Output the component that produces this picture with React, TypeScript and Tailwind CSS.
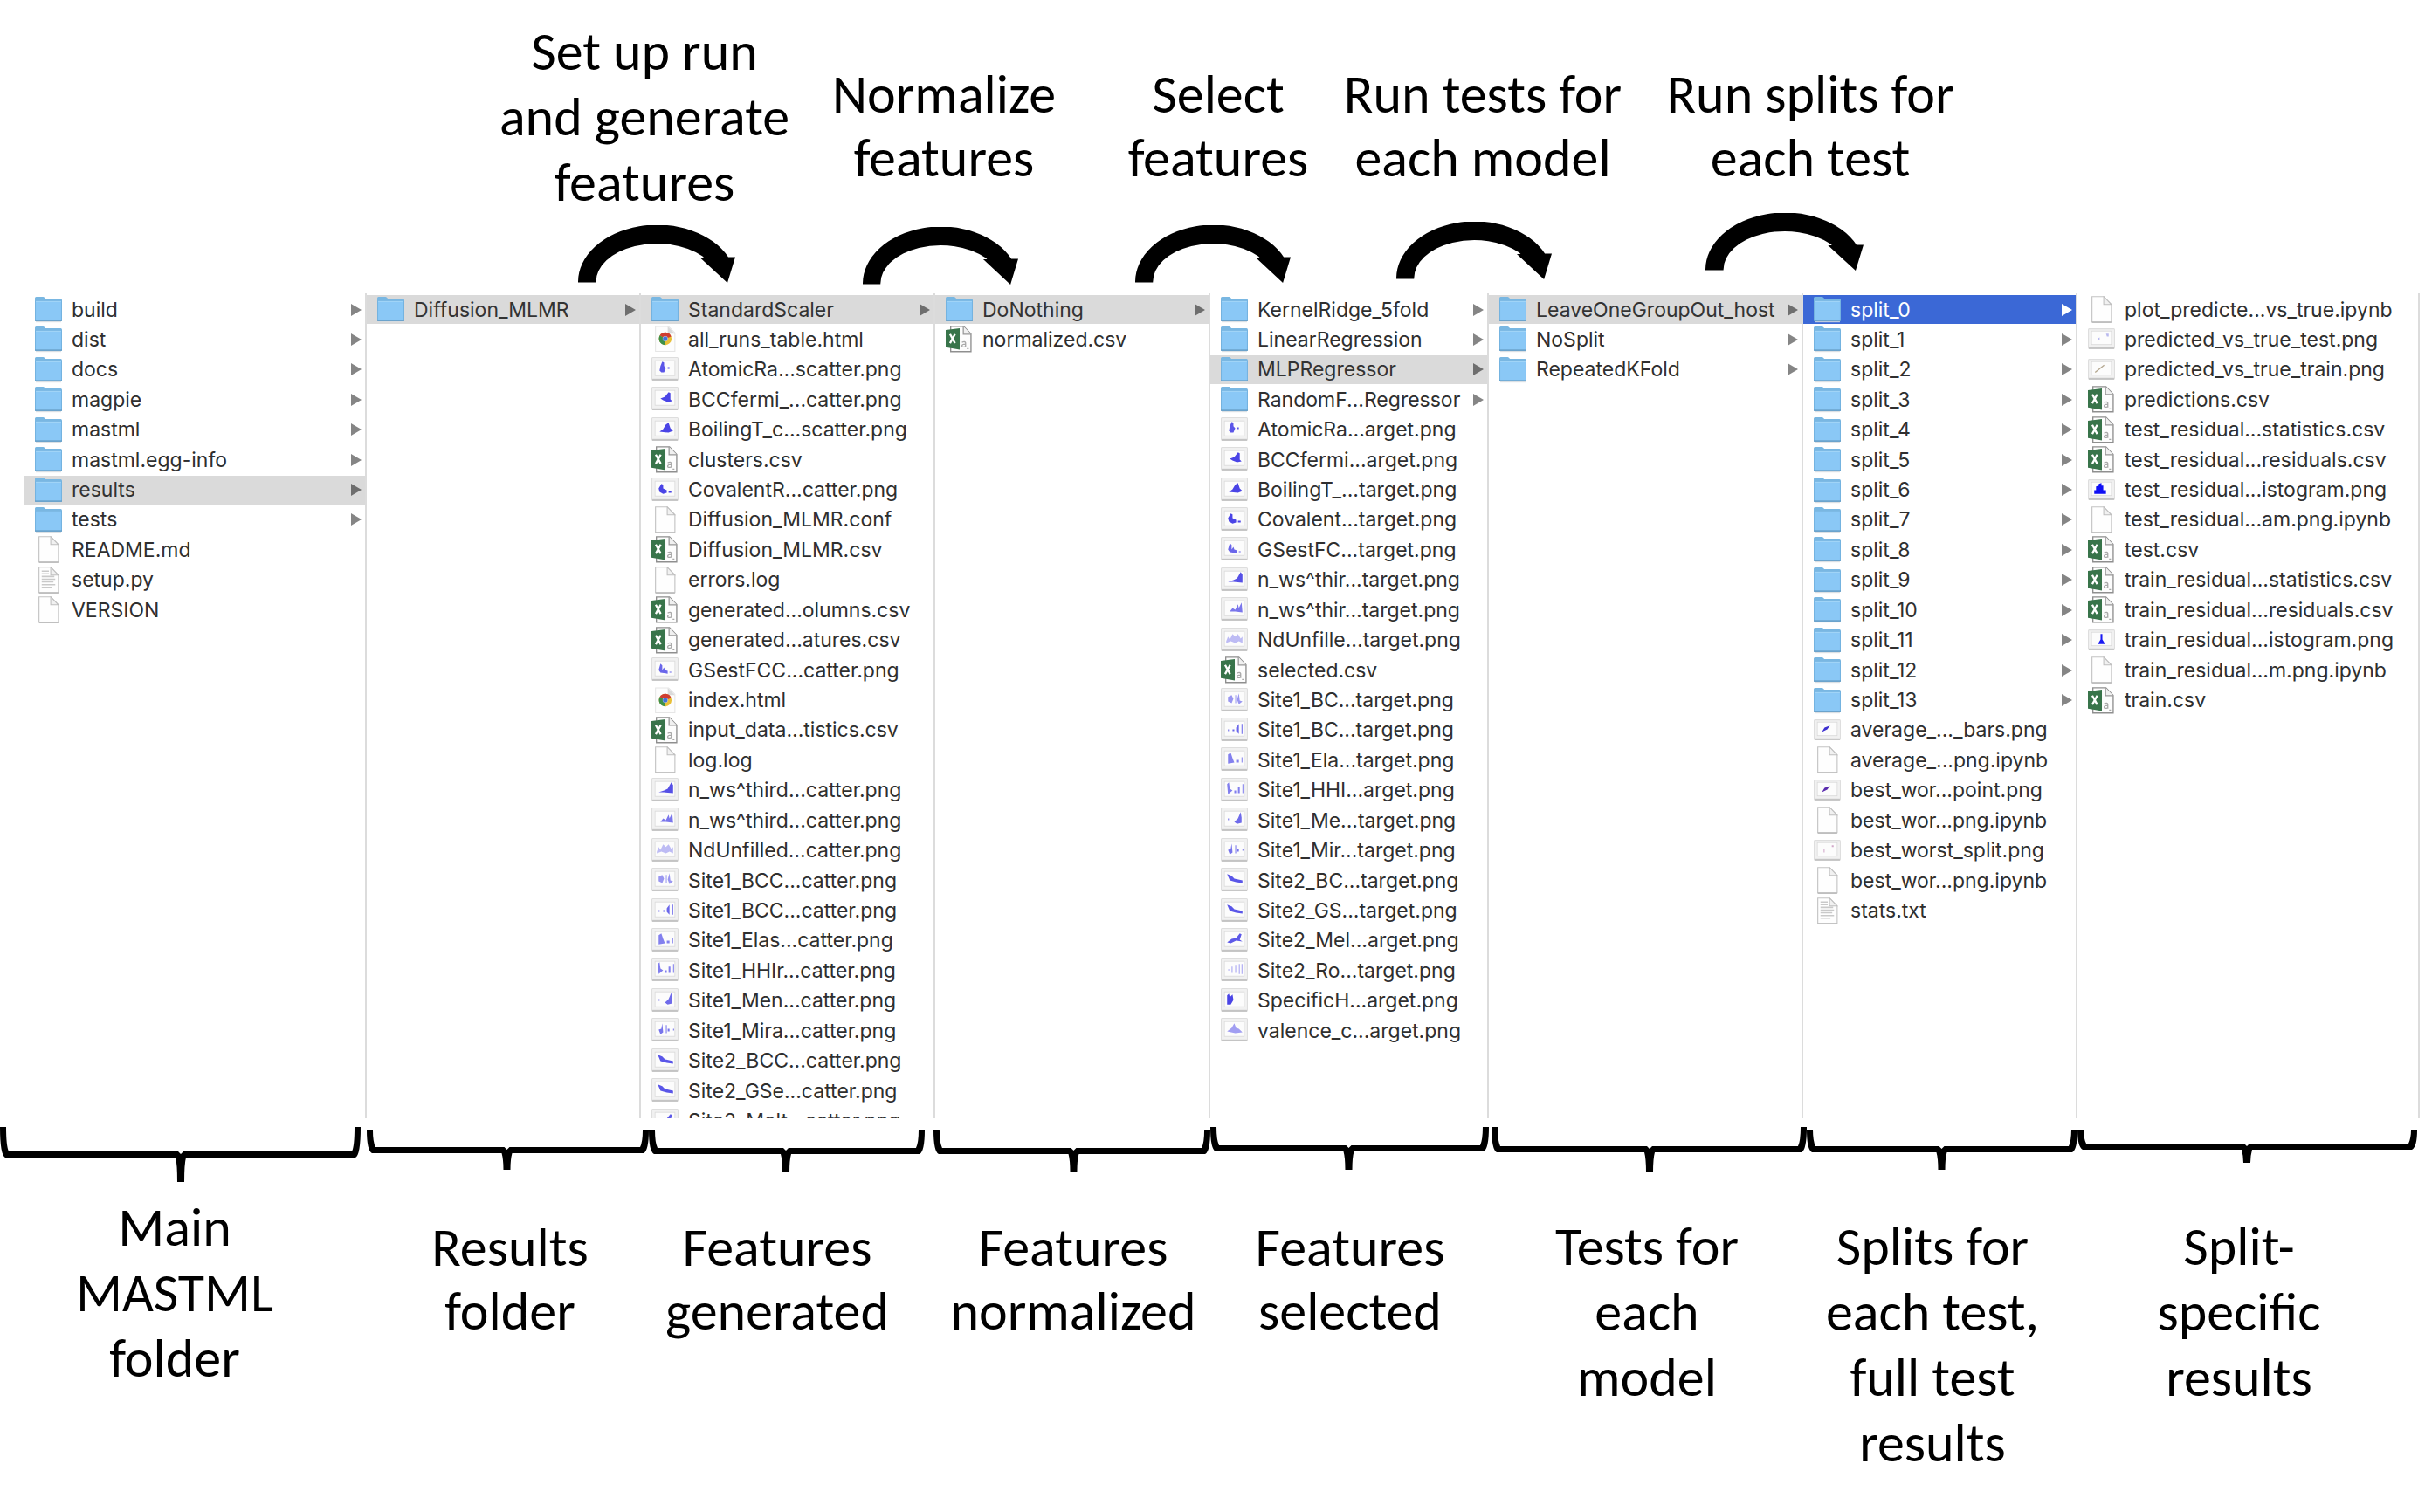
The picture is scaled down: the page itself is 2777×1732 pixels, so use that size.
import React from "react";

type Kind = "folder" | "doc" | "text" | "html" | "csv" | "png" | "wide";
type Entry = { name: string; kind: Kind; plot?: string };
type Column = { label: string; selected?: string; active?: boolean; entries: Entry[] };

/* Marks drawn inside the image thumbnails, on a 30 x 30 grid. */
const plots: Record<string, React.ReactNode> = {
  atomic: <path d="M10 11l2-5 2 1v4l2 2-2 5h-3l-2-2zM18 12h2v2h-2z" fill="#5a55e8" />,
  fermi: <path d="M10 14l5-2 4-5 2 1v7l2 2-5 1-5-2z" fill="#4a44e6" />,
  boiling: <path d="M9 17l4-3 3-5 3-2 2 6 3 3-5 2z" fill="#4a44e6" />,
  covalent: <path d="M8 13l3-5 2 1v4l4 2v3l-4 1-4-2zM19 16h3v2h-3z" fill="#4a44e6" />,
  gsest: <path d="M8 15l2-7 2 2v5l2-3 1 3 3 1v3l-8-1zM20 17h2v1h-2z" fill="#6a66ea" />,
  nws: <path d="M8 17l6-2 4-2 4-7 2 3v9l-10-1z" fill="#5650e6" />,
  nws2: <path d="M10 17l3-4 3 2 3-6 1 4 3-6 1 11-8-1z" fill="#7a76ec" />,
  unfilled: <path d="M6 16l2-5 2 3 3-6 3 3 3-3 3 5 2-2v7l-4-2-4 2-5-2-5 2z" fill="#bdbbf4" />,
  pair: <path d="M8 11l4-2 2 4-2 5-4-2zM16 9h1v9h-1zM18 14l2-7 1 8 3 1-4 3z" fill="#9a97f1" />,
  spike: <path d="M8 14h1v2H8zM13 14h2v2h-2zM17 12l3-4v11l-3-3zM23 8h1v11h-1z" fill="#6a66ea" />,
  elastic: <path d="M8 9l3-2 2 6 2 5-7 1zM17 15h3v3h-3zM23 12h1v6h-1z" fill="#8380ee" />,
  hhi: <path d="M7 8l2-2 1 7 3 2-5 4zM15 15h2v3h-2zM19 11h2v7h-2zM24 8h1v10h-1z" fill="#817eee" />,
  men: <path d="M8 13h1v2H8zM15 17l4-4 3-7 1 6v6l-5 1z" fill="#6f6bea" />,
  mira: <path d="M8 14l3-1 1-6 1 10-3 2zM16 9h1v9h-1zM18 13h2v3h-2zM24 13h1v2h-1z" fill="#7774ec" />,
  falling: <path d="M7 8l5 2 3 3 9 2v3l-7-1-7-2z" fill="#5a56e8" />,
  rising: <path d="M7 17l5-4 5-1 4-5 2 1-2 6 3 2-7-1-6 3z" fill="#5d59e8" />,
  bars: <path d="M8 14h2v1H8zM12 11h1v7h-1zM16 9h1v9h-1zM20 8h1v11h-1zM23 8h1v11h-1z" fill="#a5a2f2" />,
  block: <path d="M7 9l2-2 1 4 3-3 1 6-3 5H7z" fill="#4a44e6" />,
  valence: <path d="M7 16l5-4 3-5 2 5 3 1 4 4-8 1z" fill="#a19ef2" />,
  parity: <path d="M9 17l3-5 6-2-3 4z" fill="#3d2fd0" />,
  parityRed: <path d="M9 17l3-5 6-2-3 4z" fill="#5a2cae" />,
  dot: <path d="M11 13h1v4h-1zM20 9h2v2h-2z" fill="#d1a6c8" />,
  faint: <path d="M11 14l2-1v3h-2zM20 9h3v3h-2z" fill="#b9b9ee" />,
  line: <path d="M8 18L18 10" stroke="#b3a68e" strokeWidth="1.3" fill="none" />,
  histogram: <path d="M7 19v-4h2v-4l3-1V8l3-1v3h2v5h3v4z" fill="#1010f5" />,
  histogramThin: <path d="M11 19l3-5V8h2v6l3 5z" fill="#1a1af2" />,
};

function FolderIcon() {
  return (
    <svg viewBox="0 0 30 30" className="size-[31px] shrink-0" aria-hidden="true">
      <path d="M0 2.500Q0 1 1.500 1H9q1 0 1.800 1l.9 1H28.500Q30 3 30 4.500V8H0z" fill="#79b7e2" />
      <path d="M0 6.200h30V26.500Q30 28 28.500 28h-27Q0 28 0 26.500z" fill="#8ac8f6" />
      <path d="M.5 6.200h29" stroke="#a3d6f8" strokeWidth="1" />
      <path d="M.5 5v22M29.500 5v22" stroke="#74b3e0" strokeWidth="1" />
      <path d="M0 27.200h30" stroke="#6298c0" strokeWidth="1.300" />
      <path d="M1 28.700h28" stroke="#d5dbe0" strokeWidth="1" />
    </svg>
  );
}

function Page({ children }: { children?: React.ReactNode }) {
  return (
    <svg viewBox="0 0 30 30" className="size-[31px] shrink-0" aria-hidden="true">
      <path d="M4.500.7h13L26 9.500v19.300H4.500z" fill="#fefefe" stroke="#c4c4c4" strokeWidth="1.100" />
      <path d="M17.500.7v8.800H26z" fill="#f1f1f1" stroke="#bfbfbf" strokeWidth="1" />
      <path d="M4.500 29.200H26" stroke="#b3b3b3" strokeWidth="1.200" />
      {children}
    </svg>
  );
}

function HtmlIcon() {
  return (
    <svg viewBox="0 0 30 30" className="size-[31px] shrink-0" aria-hidden="true">
      <path d="M4.500 1h14.500L26 8v20.500H4.500z" fill="#fdfdfd" stroke="#e6e6e6" strokeWidth="1" />
      <path d="M18 1v8h8z" fill="#dadada" />
      <circle cx="15.300" cy="14.500" r="7" fill="#e8bf36" />
      <path d="M15.300 14.500L9.200 11A7 7 0 0 1 21.900 12z" fill="#cf3d31" />
      <path d="M15.300 14.500L9.200 11a7 7 0 0 0 5.500 10.500z" fill="#3d8f4a" />
      <circle cx="15.300" cy="14.500" r="2.900" fill="#b9c9ee" />
      <circle cx="15.300" cy="14.500" r="2.500" fill="#4273d8" />
    </svg>
  );
}

function CsvIcon() {
  return (
    <svg viewBox="0 0 30 30" className="size-[31px] shrink-0" aria-hidden="true">
      <path d="M5.500.8h14.500l8 8.500v19.500H5.500z" fill="#fdfdfd" stroke="#8f8f8f" strokeWidth="1.300" />
      <path d="M19.500.8v8.700H28" fill="#f0f0f0" stroke="#979797" strokeWidth="1.200" />
      <path d="M18 18.500q3.500-1.500 4 .5v5M22 20.500q-4 0-4 2t4 .5M23.500 25.500h2" fill="none" stroke="#a9a9a9" strokeWidth="1.300" />
      <path d="M0 4.800L15.500 3v23.500L0 24z" fill="#38744a" />
      <path d="M4.800 9.500l5.500 10M10.300 9.500l-5.500 10" stroke="#fff" strokeWidth="2.200" />
    </svg>
  );
}

function ImageIcon({ plot, wide }: { plot?: string; wide?: boolean }) {
  return (
    <svg viewBox="0 0 30 30" className="size-[31px] shrink-0" aria-hidden="true">
      <rect x="0.500" y={wide ? 3.500 : 1.500} width="29" height={wide ? 22 : 25} rx="1" fill="#f1f1f1" stroke="#dedede" />
      <rect x="4" y={wide ? 6 : 5} width="22" height={wide ? 15 : 16.500} fill="#fcfcfc" stroke="#dadada" strokeWidth="0.800" />
      <path d={wide ? "M1 25h28" : "M1 26h28"} stroke="#c4c4c4" strokeWidth="2" />
      {plot ? plots[plot] : null}
    </svg>
  );
}

function Icon({ entry }: { entry: Entry }) {
  switch (entry.kind) {
    case "folder":
      return <FolderIcon />;
    case "html":
      return <HtmlIcon />;
    case "csv":
      return <CsvIcon />;
    case "png":
      return <ImageIcon plot={entry.plot} />;
    case "wide":
      return <ImageIcon plot={entry.plot} wide />;
    case "text":
      return (
        <Page>
          <path d="M7.500 5h8M7.500 8h8M7.500 11h14M7.500 14h15M7.500 17h13M7.500 20h15M7.500 23h11" stroke="#c9c9c9" strokeWidth="1.500" />
        </Page>
      );
    default:
      return <Page />;
  }
}

const folder = (name: string): Entry => ({ name, kind: "folder" });
const doc = (name: string): Entry => ({ name, kind: "doc" });
const csv = (name: string): Entry => ({ name, kind: "csv" });
const png = (name: string, plot: string): Entry => ({ name, kind: "png", plot });
const wide = (name: string, plot: string): Entry => ({ name, kind: "wide", plot });

const columns: Column[] = [
  {
    label: "Main MASTML folder",
    selected: "results",
    entries: [
      folder("build"),
      folder("dist"),
      folder("docs"),
      folder("magpie"),
      folder("mastml"),
      folder("mastml.egg-info"),
      folder("results"),
      folder("tests"),
      doc("README.md"),
      { name: "setup.py", kind: "text" },
      doc("VERSION"),
    ],
  },
  { label: "Results folder", selected: "Diffusion_MLMR", entries: [folder("Diffusion_MLMR")] },
  {
    label: "Features generated",
    selected: "StandardScaler",
    entries: [
      folder("StandardScaler"),
      { name: "all_runs_table.html", kind: "html" },
      png("AtomicRa...scatter.png", "atomic"),
      png("BCCfermi_...catter.png", "fermi"),
      png("BoilingT_c...scatter.png", "boiling"),
      csv("clusters.csv"),
      png("CovalentR...catter.png", "covalent"),
      doc("Diffusion_MLMR.conf"),
      csv("Diffusion_MLMR.csv"),
      doc("errors.log"),
      csv("generated...olumns.csv"),
      csv("generated...atures.csv"),
      png("GSestFCC...catter.png", "gsest"),
      { name: "index.html", kind: "html" },
      csv("input_data...tistics.csv"),
      doc("log.log"),
      png("n_ws^third...catter.png", "nws"),
      png("n_ws^third...catter.png", "nws2"),
      png("NdUnfilled...catter.png", "unfilled"),
      png("Site1_BCC...catter.png", "pair"),
      png("Site1_BCC...catter.png", "spike"),
      png("Site1_Elas...catter.png", "elastic"),
      png("Site1_HHIr...catter.png", "hhi"),
      png("Site1_Men...catter.png", "men"),
      png("Site1_Mira...catter.png", "mira"),
      png("Site2_BCC...catter.png", "falling"),
      png("Site2_GSe...catter.png", "falling"),
      png("Site2_Melt...catter.png", "rising"),
    ],
  },
  { label: "Features normalized", selected: "DoNothing", entries: [folder("DoNothing"), csv("normalized.csv")] },
  {
    label: "Features selected",
    selected: "MLPRegressor",
    entries: [
      folder("KernelRidge_5fold"),
      folder("LinearRegression"),
      folder("MLPRegressor"),
      folder("RandomF...Regressor"),
      png("AtomicRa...arget.png", "atomic"),
      png("BCCfermi...arget.png", "fermi"),
      png("BoilingT_...target.png", "boiling"),
      png("Covalent...target.png", "covalent"),
      png("GSestFC...target.png", "gsest"),
      png("n_ws^thir...target.png", "nws"),
      png("n_ws^thir...target.png", "nws2"),
      png("NdUnfille...target.png", "unfilled"),
      csv("selected.csv"),
      png("Site1_BC...target.png", "pair"),
      png("Site1_BC...target.png", "spike"),
      png("Site1_Ela...target.png", "elastic"),
      png("Site1_HHI...arget.png", "hhi"),
      png("Site1_Me...target.png", "men"),
      png("Site1_Mir...target.png", "mira"),
      png("Site2_BC...target.png", "falling"),
      png("Site2_GS...target.png", "falling"),
      png("Site2_Mel...arget.png", "rising"),
      png("Site2_Ro...target.png", "bars"),
      png("SpecificH...arget.png", "block"),
      png("valence_c...arget.png", "valence"),
    ],
  },
  {
    label: "Tests for each model",
    selected: "LeaveOneGroupOut_host",
    entries: [folder("LeaveOneGroupOut_host"), folder("NoSplit"), folder("RepeatedKFold")],
  },
  {
    label: "Splits for each test",
    selected: "split_0",
    active: true,
    entries: [
      ...Array.from({ length: 14 }, (_, i) => folder(`split_${i}`)),
      wide("average_..._bars.png", "parity"),
      doc("average_...png.ipynb"),
      wide("best_wor...point.png", "parityRed"),
      doc("best_wor...png.ipynb"),
      wide("best_worst_split.png", "dot"),
      doc("best_wor...png.ipynb"),
      { name: "stats.txt", kind: "text" },
    ],
  },
  {
    label: "Split-specific results",
    entries: [
      doc("plot_predicte...vs_true.ipynb"),
      wide("predicted_vs_true_test.png", "faint"),
      wide("predicted_vs_true_train.png", "line"),
      csv("predictions.csv"),
      csv("test_residual...statistics.csv"),
      csv("test_residual...residuals.csv"),
      wide("test_residual...istogram.png", "histogram"),
      doc("test_residual...am.png.ipynb"),
      csv("test.csv"),
      csv("train_residual...statistics.csv"),
      csv("train_residual...residuals.csv"),
      wide("train_residual...istogram.png", "histogramThin"),
      doc("train_residual...m.png.ipynb"),
      csv("train.csv"),
    ],
  },
];

function Row({ entry, selected, active }: { entry: Entry; selected: boolean; active: boolean }) {
  const tone = selected ? (active ? "bg-[#3b68d6] text-white" : "bg-[#dadada] text-[#333333]") : "text-[#2f2f2f]";
  const arrow = selected ? (active ? "fill-white" : "fill-[#6e6e6e]") : "fill-[#858585]";
  return (
    <li>
      <button type="button" className={`flex h-[33px] w-full items-center gap-[11px] pr-1 pl-3 text-left ${tone}`}>
        <Icon entry={entry} />
        <span className="flex-1 whitespace-nowrap">{entry.name}</span>
        {entry.kind === "folder" && (
          <svg viewBox="0 0 12 14" className={`h-3.5 w-3 shrink-0 ${arrow}`} aria-hidden="true">
            <path d="M0 0l12 7L0 14z" />
          </svg>
        )}
      </button>
    </li>
  );
}

function Browser() {
  return (
    <section
      aria-label="File browser"
      className="mr-1.5 ml-7 grid h-[945px] grid-cols-[392fr_314fr_337fr_315fr_319fr_360fr_314fr_392fr] overflow-hidden font-['Inter',sans-serif] text-[23px] leading-8"
    >
      {columns.map((column) => (
        <div key={column.label} className="min-w-0 border-r-2 border-[#dcdcdc] pt-0.5">
          <ul aria-label={column.label} className="grid h-[964px] grid-rows-[repeat(28,minmax(0,1fr))]">
            {column.entries.map((entry, i) => (
              <Row key={i} entry={entry} selected={entry.name === column.selected} active={!!column.active} />
            ))}
          </ul>
        </div>
      ))}
    </section>
  );
}

const steps = [
  { lines: ["Set up run", "and generate", "features"], place: "col-start-2 leading-[75px]" },
  { lines: ["Normalize", "features"], place: "col-start-4 pt-[50px] leading-[73px]" },
  { lines: ["Select", "features"], place: "col-start-6 pt-[50px] leading-[73px]" },
  { lines: ["Run tests for", "each model"], place: "col-start-8 pt-[50px] leading-[73px]" },
  { lines: ["Run splits for", "each test"], place: "col-start-10 pt-[50px] leading-[73px]" },
];

const arrows = ["col-start-2 pt-3.5", "col-start-4 pt-4", "col-start-6 pt-3.5", "col-start-8 pt-2.5", "col-start-10"];

const captions = [
  { lines: ["Main", "MASTML", "folder"], place: "col-start-2 leading-[75px]" },
  { lines: ["Results", "folder"], place: "col-start-4 pt-6 leading-[73px]" },
  { lines: ["Features", "generated"], place: "col-start-6 pt-6 leading-[73px]" },
  { lines: ["Features", "normalized"], place: "col-start-8 pt-6 leading-[73px]" },
  { lines: ["Features", "selected"], place: "col-start-10 pt-6 leading-[73px]" },
  { lines: ["Tests for", "each", "model"], place: "col-start-12 pt-[22px] leading-[75px]" },
  { lines: ["Splits for", "each test,", "full test", "results"], place: "col-start-14 pt-[22px] leading-[75px]" },
  { lines: ["Split-", "specific", "results"], place: "col-start-16 pt-[22px] leading-[75px]" },
];

/* Brace geometry: width, tip position, top, bar top and tip bottom. */
const braces = [
  { w: 413, tip: 207, top: 0, bar: 28, end: 63, place: "col-start-1" },
  { w: 324, tip: 161, top: 3, bar: 23, end: 49, place: "col-start-3" },
  { w: 316, tip: 157, top: 3, bar: 24, end: 52, place: "col-start-4" },
  { w: 320, tip: 162, top: 3, bar: 24, end: 52, place: "col-start-6" },
  { w: 318, tip: 158, top: 0, bar: 21, end: 49, place: "col-start-7" },
  { w: 361, tip: 181, top: 0, bar: 22, end: 52, place: "col-start-9" },
  { w: 309, tip: 154, top: 3, bar: 22, end: 49, place: "col-start-10" },
  { w: 389, tip: 194, top: 3, bar: 19, end: 41, place: "col-start-11" },
];

function Brace({ w, tip, top, bar, end, place }: (typeof braces)[number]) {
  const d = [
    `M0 ${top}H7Q7 ${bar - 6} 10 ${bar}H${tip - 3}L${tip} ${bar + 3}L${tip + 3} ${bar}H${w - 10}Q${w - 7} ${bar - 6} ${w - 7} ${top}H${w}`,
    `Q${w} ${bar + 4} ${w - 6} ${bar + 7}H${tip + 6}Q${tip + 4} ${bar + 14} ${tip + 4} ${end}H${tip - 4}`,
    `Q${tip - 4} ${bar + 14} ${tip - 6} ${bar + 7}H6Q0 ${bar + 4} 0 ${top}z`,
  ].join("");
  return (
    <svg viewBox={`0 0 ${w} 64`} preserveAspectRatio="none" className={`h-16 w-full ${place}`} aria-hidden="true">
      <path d={d} />
    </svg>
  );
}

function Label({ lines, place }: { lines: string[]; place: string }) {
  return (
    <p className={`flex flex-col items-center whitespace-nowrap ${place}`}>
      {lines.map((line) => (
        <span key={line}>{line}</span>
      ))}
    </p>
  );
}

export default function App() {
  return (
    <main className="min-h-screen overflow-x-hidden bg-white font-['Carlito','Lato',sans-serif] text-[62px] text-black">
      <header className="grid h-[244px] grid-cols-[558fr_360fr_23fr_280fr_44fr_260fr_13fr_320fr_45fr_340fr_534fr] items-start pt-[22px]">
        {steps.map((step) => (
          <Label key={step.lines.join(" ")} {...step} />
        ))}
      </header>
      <div className="grid h-[92px] grid-cols-[662fr_180fr_146fr_178fr_134fr_178fr_121fr_178fr_176fr_181fr_643fr] items-start">
        {arrows.map((place) => (
          <svg
            key={place}
            viewBox="0 0 180 66"
            preserveAspectRatio="none"
            className={`box-content h-[66px] w-full ${place}`}
            aria-hidden="true"
          >
            <path d="M0 65.500A90.500 65.500 0 0 1 172 36.500H180L171 66L139.500 37H144L142.500 35.500A70 44 0 0 0 20.500 65.500z" />
          </svg>
        ))}
      </div>
      <Browser />
      <div className="mt-2.5 grid grid-cols-[413fr_7fr_323fr_316fr_10fr_317fr_319fr_3fr_361fr_310fr_389fr_9fr]">
        {braces.map((brace) => (
          <Brace key={brace.place} {...brace} />
        ))}
      </div>
      <footer className="mt-3.5 grid grid-cols-[70fr_260fr_140fr_228fr_60fr_264fr_62fr_290fr_58fr_228fr_110fr_232fr_81fr_260fr_111fr_220fr_103fr] items-start">
        {captions.map((caption) => (
          <Label key={caption.lines.join(" ")} {...caption} />
        ))}
      </footer>
    </main>
  );
}
